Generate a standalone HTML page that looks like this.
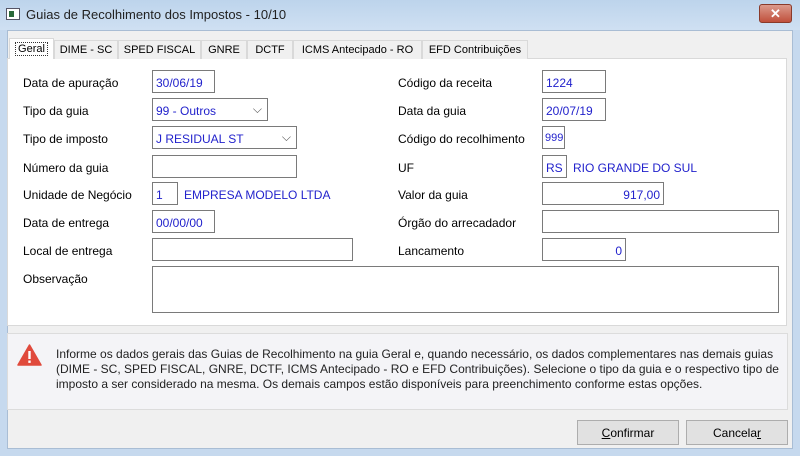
<!DOCTYPE html><html><head><style>
*{box-sizing:border-box}
body{margin:0;width:800px;height:456px;overflow:hidden;font-family:"Liberation Sans",sans-serif;font-size:12px;color:#000;position:relative;background:#c6d9ee}
.abs{position:absolute}
.title{left:0;top:0;width:800px;height:30px;background:linear-gradient(#bdd4ec,#cfe0f2)}
.client{left:7px;top:30px;width:786px;height:419px;background:#f0f0f0;border:1px solid #a9bdd4}
.panel{left:7px;top:58px;width:780px;height:268px;background:#fff;border:1px solid #d9d9d9}
.tab{top:40px;height:19px;background:#f0f0f0;border:1px solid #d9d9d9;border-bottom:none;padding:3px 0 0;white-space:nowrap;font-size:11px;text-align:center;overflow:hidden}
.lab{white-space:nowrap}
.in{border:1px solid #7a7a7a;background:#fff;height:23px;padding:5px 3px 0;color:#2222cc;white-space:nowrap}
.blue{color:#2222cc}
.btn{top:420px;height:25px;border:1px solid #adadad;background:#e1e1e1;text-align:center;padding-top:5px}
</style></head><body>
<div class="abs title"></div>
<div class="abs" style="left:6px;top:8px;width:14px;height:12px;border:1px solid #556;background:#fff"><div style="margin:2px;width:5px;height:6px;background:#2a6a3a"></div></div>
<div class="abs" style="left:26px;top:7px;font-size:13px;color:#222">Guias de Recolhimento dos Impostos - 10/10</div>
<div class="abs" style="left:759px;top:4px;width:33px;height:19px;background:linear-gradient(#dc9a8c,#c0503c);border:1px solid #8a3a2a;border-radius:3px;color:#fff;text-align:center;font-weight:bold;font-size:13px;line-height:17px">✕</div>
<div class="abs client"></div>
<div class="abs panel"></div>
<div class="abs tab" style="left:9px;top:38px;height:21px;width:45px;background:#fff;padding-top:4px"><span style="border:1px dotted #333;padding:0 2px">Geral</span></div>
<div class="abs tab" style="left:54px;width:64px">DIME - SC</div>
<div class="abs tab" style="left:118px;width:83px">SPED FISCAL</div>
<div class="abs tab" style="left:201px;width:46px">GNRE</div>
<div class="abs tab" style="left:247px;width:46px">DCTF</div>
<div class="abs tab" style="left:293px;width:129px">ICMS Antecipado - RO</div>
<div class="abs tab" style="left:422px;width:106px">EFD Contribuições</div>

<div class="abs lab" style="left:23px;top:76px">Data de apuração</div>
<div class="abs in" style="left:152px;top:70px;width:63px">30/06/19</div>
<div class="abs lab" style="left:23px;top:104px">Tipo da guia</div>
<div class="abs in" style="left:152px;top:98px;width:116px">99 - Outros<span style="position:absolute;right:5px;top:3px;color:#555">⌵</span></div>
<div class="abs lab" style="left:23px;top:132px">Tipo de imposto</div>
<div class="abs in" style="left:152px;top:126px;width:145px">J RESIDUAL ST<span style="position:absolute;right:5px;top:3px;color:#555">⌵</span></div>
<div class="abs lab" style="left:23px;top:161px">Número da guia</div>
<div class="abs in" style="left:152px;top:155px;width:145px"></div>
<div class="abs lab" style="left:23px;top:188px">Unidade de Negócio</div>
<div class="abs in" style="left:152px;top:182px;width:26px">1</div>
<div class="abs blue" style="left:184px;top:188px">EMPRESA MODELO LTDA</div>
<div class="abs lab" style="left:23px;top:216px">Data de entrega</div>
<div class="abs in" style="left:152px;top:210px;width:63px">00/00/00</div>
<div class="abs lab" style="left:23px;top:244px">Local de entrega</div>
<div class="abs in" style="left:152px;top:238px;width:201px"></div>
<div class="abs lab" style="left:23px;top:272px">Observação</div>
<div class="abs in" style="left:152px;top:266px;width:627px;height:47px"></div>

<div class="abs lab" style="left:398px;top:76px">Código da receita</div>
<div class="abs in" style="left:542px;top:70px;width:64px">1224</div>
<div class="abs lab" style="left:398px;top:104px">Data da guia</div>
<div class="abs in" style="left:542px;top:98px;width:64px">20/07/19</div>
<div class="abs lab" style="left:398px;top:132px">Código do recolhimento</div>
<div class="abs in" style="left:542px;top:126px;width:23px;padding-left:2px;font-size:11px">999</div>
<div class="abs lab" style="left:398px;top:161px">UF</div>
<div class="abs in" style="left:542px;top:155px;width:25px">RS</div>
<div class="abs blue" style="left:573px;top:161px">RIO GRANDE DO SUL</div>
<div class="abs lab" style="left:398px;top:188px">Valor da guia</div>
<div class="abs in" style="left:542px;top:182px;width:122px;text-align:right">917,00</div>
<div class="abs lab" style="left:398px;top:216px">Órgão do arrecadador</div>
<div class="abs in" style="left:542px;top:210px;width:237px"></div>
<div class="abs lab" style="left:398px;top:244px">Lancamento</div>
<div class="abs in" style="left:542px;top:238px;width:84px;text-align:right">0</div>

<div class="abs" style="left:7px;top:333px;width:781px;height:77px;background:#f4f4f7;border:1px solid #dcdcdc"></div>
<svg class="abs" style="left:17px;top:344px" width="25" height="22" viewBox="0 0 25 22"><path d="M12.5 1 L24 21 L1 21 Z" fill="#e04a3c" stroke="#e04a3c" stroke-linejoin="round" stroke-width="1.5"/><rect x="11.3" y="7" width="2.4" height="8" fill="#fff"/><rect x="11.3" y="16.5" width="2.4" height="2.4" fill="#fff"/></svg>
<div class="abs" style="left:56px;top:347px;width:735px;line-height:15px;color:#222">Informe os dados gerais das Guias de Recolhimento na guia Geral e, quando necessário, os dados complementares nas demais guias<br>(DIME - SC, SPED FISCAL, GNRE, DCTF, ICMS Antecipado - RO e EFD Contribuições). Selecione o tipo da guia e o respectivo tipo de<br>imposto a ser considerado na mesma. Os demais campos estão disponíveis para preenchimento conforme estas opções.</div>

<div class="abs btn" style="left:577px;width:102px"><u>C</u>onfirmar</div>
<div class="abs btn" style="left:686px;width:102px">Cancela<u>r</u></div>
</body></html>
